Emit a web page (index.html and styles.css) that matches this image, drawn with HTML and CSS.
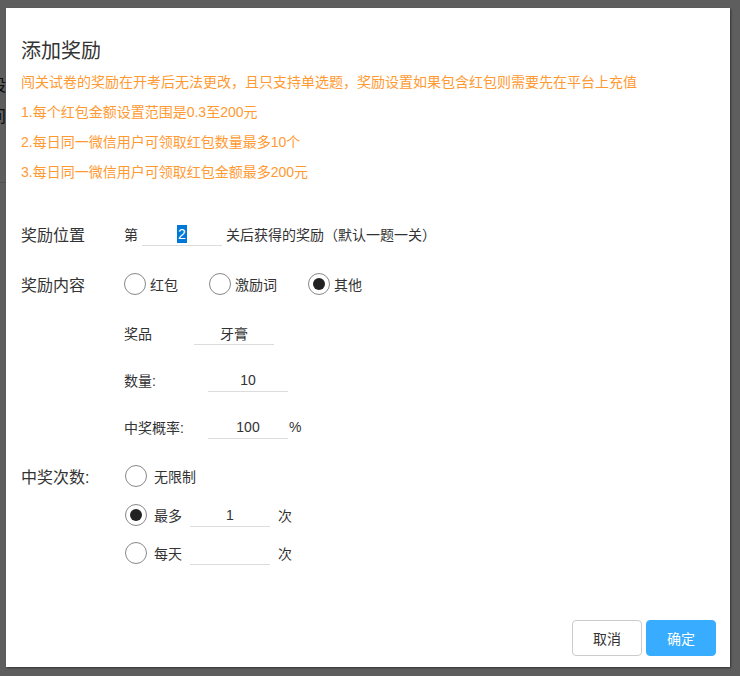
FILE: index.html
```html
<!DOCTYPE html>
<html lang="zh-CN">
<head>
<meta charset="utf-8">
<title>添加奖励</title>
<link rel="stylesheet" href="styles.css">
</head>
<body>
<div class="page">
  <div class="page-row">设置</div>
  <div class="page-row">问题</div>
  <div class="page-line"></div>
</div>
<div class="overlay"></div>
<div class="modal">
  <h2 class="title">添加奖励</h2>
  <div class="notes">
    <p>闯关试卷的奖励在开考后无法更改，且只支持单选题，奖励设置如果包含红包则需要先在平台上充值</p>
    <p>1.每个红包金额设置范围是0.3至200元</p>
    <p>2.每日同一微信用户可领取红包数量最多10个</p>
    <p>3.每日同一微信用户可领取红包金额最多200元</p>
  </div>
  <div class="form">
    <div class="row row-pos">
      <div class="label">奖励位置</div>
      <span class="txt">第</span>
      <span class="field field-pos"><span class="sel">2</span></span>
      <span class="txt">关后获得的奖励（默认一题一关）</span>
    </div>
    <div class="row row-content">
      <div class="label">奖励内容</div>
      <span class="opt"><span class="radio"></span><span class="txt">红包</span></span>
      <span class="opt"><span class="radio"></span><span class="txt">激励词</span></span>
      <span class="opt"><span class="radio on"></span><span class="txt">其他</span></span>
    </div>
    <div class="row sub sub-first">
      <span class="sublabel sublabel-short">奖品</span>
      <span class="field">牙膏</span>
    </div>
    <div class="row sub">
      <span class="sublabel">数量:</span>
      <span class="field">10</span>
    </div>
    <div class="row sub">
      <span class="sublabel">中奖概率:</span>
      <span class="field">100</span>
      <span class="txt unit-pct">%</span>
    </div>
    <div class="row row-count">
      <div class="label">中奖次数:</div>
      <span class="opt"><span class="radio"></span><span class="txt opt-txt">无限制</span></span>
    </div>
    <div class="row sub opt-row opt-row-1">
      <span class="radio on"></span><span class="txt opt-txt">最多</span>
      <span class="field field-times">1</span>
      <span class="txt unit">次</span>
    </div>
    <div class="row sub opt-row opt-row-2">
      <span class="radio"></span><span class="txt opt-txt">每天</span>
      <span class="field field-times"></span>
      <span class="txt unit">次</span>
    </div>
  </div>
  <div class="footer">
    <button class="btn btn-cancel">取消</button>
    <button class="btn btn-ok">确定</button>
  </div>
</div>
</body>
</html>
```

FILE: styles.css
```css
html, body {
  margin: 0;
  padding: 0;
}
body {
  width: 740px;
  height: 676px;
  overflow: hidden;
  position: relative;
  background: #fff;
  font-family: "Liberation Sans", "Noto Sans CJK SC", sans-serif;
  color: #333;
}
.page {
  padding-top: 76px;
  margin-left: -10px;
}
.page-row {
  font-size: 16px;
  line-height: 20px;
  height: 31px;
  color: #222;
}
.page-line {
  margin-top: 44px;
  margin-left: 10px;
  width: 40px;
  height: 1px;
  background: #ddd;
}
.overlay {
  position: absolute;
  inset: 0;
  background: rgba(0, 0, 0, 0.63);
}
.modal {
  position: absolute;
  left: 6px;
  top: 8px;
  width: 724px;
  height: 659px;
  box-sizing: border-box;
  background: #fff;
  box-shadow: 1px 1px 2px rgba(0, 0, 0, 0.45);
  display: flex;
  flex-direction: column;
  padding: 0 14px 11px 15px;
}
.title {
  margin: 31px 0 0;
  font-size: 20px;
  line-height: 24px;
  font-weight: normal;
  color: #333;
}
.notes p {
  margin: 10px 0 0;
  font-size: 14px;
  line-height: 20px;
  color: #ff9a33;
  white-space: nowrap;
}
.notes p:first-child {
  margin-top: 9px;
}
.form {
  margin-top: 40px;
  display: flex;
  flex-direction: column;
}
.row {
  display: flex;
  align-items: center;
  height: 24px;
  font-size: 14px;
}
.label {
  width: 103px;
  font-size: 16px;
  color: #333;
}
.txt {
  font-size: 14px;
  color: #333;
  white-space: nowrap;
}
.field {
  width: 80px;
  height: 24px;
  box-sizing: border-box;
  border-bottom: 1px solid #ddd;
  display: flex;
  align-items: center;
  justify-content: center;
  font-size: 14px;
  color: #333;
}
.field-pos {
  margin: 0 4px;
}
.sel {
  background: #0078d7;
  color: #fff;
  line-height: 18px;
  padding: 0 1px;
}
.row-content {
  margin-top: 26px;
}
.opt {
  display: flex;
  align-items: center;
  margin-right: 31px;
}
.opt .txt {
  margin-left: 4px;
}
.radio {
  width: 22px;
  height: 22px;
  box-sizing: border-box;
  border: 1px solid #888;
  border-radius: 50%;
  display: flex;
  align-items: center;
  justify-content: center;
  flex: none;
}
.radio.on::after {
  content: "";
  width: 12px;
  height: 12px;
  border-radius: 50%;
  background: #222;
}
.sub {
  padding-left: 103px;
  margin-top: 23px;
}
.sub-first {
  margin-top: 25px;
}
.sublabel {
  width: 84px;
  font-size: 14px;
  color: #333;
}
.sublabel-short {
  width: 70px;
}
.unit-pct {
  margin-left: 1px;
}
.row-count {
  margin-top: 25px;
}
.row-count .opt {
  margin-left: 1px;
}
.opt-txt {
  margin-left: 7px;
}
.row-count .opt .opt-txt {
  margin-left: 7px;
}
.opt-row {
  padding-left: 104px;
}
.opt-row-1 {
  margin-top: 15px;
}
.opt-row-2 {
  margin-top: 14px;
}
.field-times {
  margin-left: 8px;
}
.unit {
  margin-left: 8px;
}
.footer {
  margin-top: auto;
  display: flex;
  justify-content: flex-end;
  gap: 4px;
}
.btn {
  width: 70px;
  height: 36px;
  box-sizing: border-box;
  border-radius: 4px;
  font-family: "Liberation Sans", "Noto Sans CJK SC", sans-serif;
  font-size: 14px;
  padding: 0;
  cursor: pointer;
}
.btn-cancel {
  background: #fff;
  border: 1px solid #ccc;
  color: #333;
}
.btn-ok {
  background: #38acff;
  border: 1px solid #38acff;
  color: #fff;
}
```
